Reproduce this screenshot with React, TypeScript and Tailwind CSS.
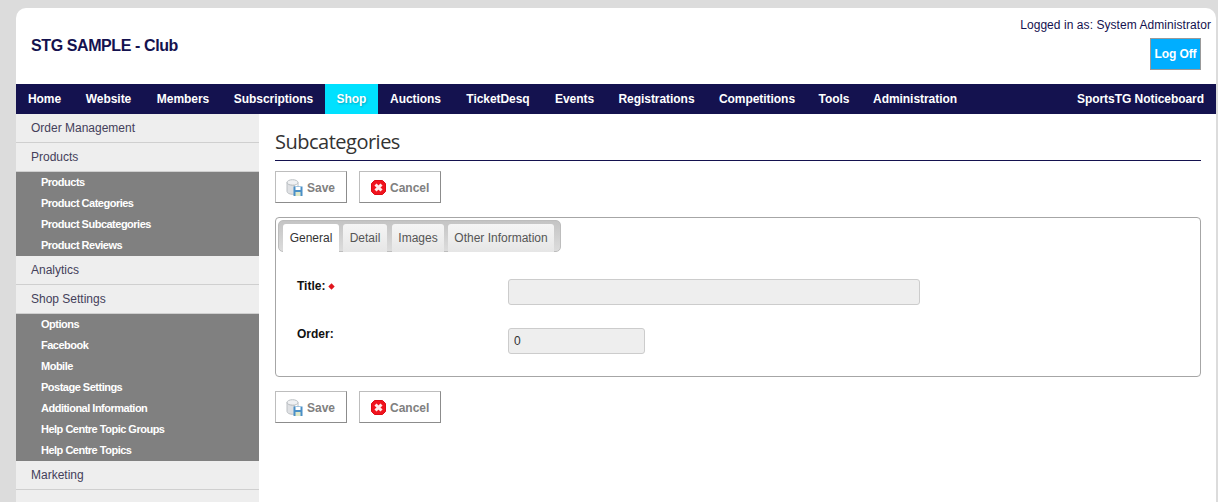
import { FC } from 'react';

// Fixed widths because the labels sit at set positions along the bar.
const NAV_ITEMS = [
  { label: 'Home', className: 'w-[57px]' },
  { label: 'Website', className: 'w-[71px]' },
  { label: 'Members', className: 'w-[78px]' },
  { label: 'Subscriptions', className: 'w-[103px]' },
  { label: 'Shop', className: 'w-[53px] bg-[#00e1ff] [text-shadow:1px_1px_2px_rgba(0,0,0,0.25)]' },
  { label: 'Auctions', className: 'w-[75px]' },
  { label: 'TicketDesq', className: 'w-[90px]' },
  { label: 'Events', className: 'w-[63px]' },
  { label: 'Registrations', className: 'w-[101px]' },
  { label: 'Competitions', className: 'w-[100px]' },
  { label: 'Tools', className: 'w-[54px]' },
  { label: 'Administration', className: 'w-[108px]' },
];

const SaveIcon: FC = () => (
  <svg width="17" height="17" viewBox="0 0 17 17" aria-hidden="true">
    <ellipse cx="6.5" cy="3.5" rx="5.5" ry="2.8" fill="#f0f1f3" stroke="#bcc0c4" />
    <path d="M1 3.5v9c0 1.500 2.500 2.800 5.500 2.800h2V6.300h-2C3.500 6.300 1 5 1 3.500z" fill="#dfe1e4" stroke="#bcc0c4" />
    <path d="M12 3.500v4" stroke="#bcc0c4" />
    <rect x="7.500" y="7.500" width="9" height="9.500" fill="#4a90c8" />
    <rect x="9.500" y="8" width="5" height="3" fill="#ffffff" />
    <rect x="9.500" y="13" width="5" height="4" fill="#dfe8c8" />
  </svg>
);

const CancelIcon: FC = () => (
  <svg width="15" height="15" viewBox="0 0 15 15" aria-hidden="true">
    <path d="M3.500 0.500h8l3 3v8l-3 3h-8l-3-3v-8z" fill="#f0141e" stroke="#dd0c16" />
    <path d="M4.500 4.500l6 6M10.500 4.500l-6 6" stroke="#ffecec" strokeWidth="3" />
  </svg>
);

const RequiredIcon: FC = () => (
  <svg width="7" height="7" viewBox="0 0 7 7" aria-hidden="true" className="ml-[3px] inline-block align-[0px]">
    <path d="M3.500 0.300L6.700 3.500 3.500 6.700 0.300 3.500z" fill="#e0151d" />
  </svg>
);

const ActionButtons: FC = () => (
  <div className="flex gap-[12px]">
    <button className="flex h-[32px] w-[72px] items-center border border-[#bdbdbd] border-r-[#8c8c8c] border-b-[#8c8c8c] bg-white pl-[10px] text-[12px] font-bold text-[#808080]">
      <SaveIcon />
      <span className="ml-[4px] pt-[1px]">Save</span>
    </button>
    <button className="flex h-[32px] w-[82px] items-center border border-[#bdbdbd] border-r-[#8c8c8c] border-b-[#8c8c8c] bg-white pl-[11px] text-[12px] font-bold text-[#808080]">
      <CancelIcon />
      <span className="ml-[4px] pt-[1px]">Cancel</span>
    </button>
  </div>
);

const SideLink: FC<{ label: string }> = ({ label }) => (
  <div className="flex h-[29px] items-center border-b border-[#cfcfcf] pl-[15px] text-[12px] text-[#44405a]">{label}</div>
);

const SubLinks: FC<{ items: string[] }> = ({ items }) => (
  <div className="bg-[#808080] pl-[25px]">
    {items.map((item) => (
      <div key={item} className="flex h-[21px] items-center text-[11px] font-bold tracking-[-0.5px] text-white">
        {item}
      </div>
    ))}
  </div>
);

export default function App() {
  return (
    <div className="h-[502px] overflow-hidden bg-[#dcdcdc] pl-[16px] pr-[2px] pt-[8px] font-['Liberation_Sans',Arial,sans-serif]">
      <div className="h-full overflow-hidden rounded-t-[10px] bg-white">
        <header className="flex h-[76px] justify-between">
          <h1 className="pl-[15px] pt-[28px] text-[16px] leading-[20px] font-bold tracking-[-0.4px] text-[#14124f]">STG SAMPLE - Club</h1>
          <div className="flex flex-col items-end pr-[5px] pt-[9px]">
            <p className="text-[12px] leading-[16px] tracking-[0.06px] text-[#14124f]">Logged in as: System Administrator</p>
            <button className="mr-[10px] mt-[5px] h-[32px] w-[51px] border border-[#999999] bg-[#00aeff] text-[12px] font-bold tracking-[-0.1px] text-white">
              Log Off
            </button>
          </div>
        </header>

        <nav className="flex h-[30px] items-stretch justify-between bg-[#14124f] text-[12px] font-bold tracking-[-0.05px] text-white">
          <div className="flex items-stretch">
            {NAV_ITEMS.map((item) => (
              <a key={item.label} className={`flex items-center justify-center ${item.className}`}>
                {item.label}
              </a>
            ))}
          </div>
          <a className="flex items-center pr-[12px]">SportsTG Noticeboard</a>
        </nav>

        <div className="flex h-[388px]">
          <aside className="w-[243px] shrink-0 bg-[#eeeeee]">
            <SideLink label="Order Management" />
            <SideLink label="Products" />
            <SubLinks items={['Products', 'Product Categories', 'Product Subcategories', 'Product Reviews']} />
            <SideLink label="Analytics" />
            <SideLink label="Shop Settings" />
            <SubLinks
              items={[
                'Options',
                'Facebook',
                'Mobile',
                'Postage Settings',
                'Additional Information',
                'Help Centre Topic Groups',
                'Help Centre Topics',
              ]}
            />
            <SideLink label="Marketing" />
          </aside>

          <main className="flex-1 pl-[16px] pr-[15px] pt-[14px]">
            <h2 className="h-[33px] border-b border-[#14124f] font-['Open_Sans',sans-serif] text-[20px] leading-[28px] tracking-[-0.5px] text-[#333333]">
              Subcategories
            </h2>
            <div className="mt-[10px]">
              <ActionButtons />
            </div>

            <section className="mt-[14px] h-[160px] rounded-[4px] border border-[#a6a6a6] p-[2px]">
              <div className="flex h-[32px] w-[283px] rounded-[5px] border border-[#bdbdbd] bg-gradient-to-b from-[#c4c4c4] to-[#dcdcdc] pl-[4px] pt-[3px] text-[12px] text-[#555555]">
                <span className="flex h-[28px] w-[56px] items-center justify-center rounded-t-[3px] bg-white text-[#333333]">General</span>
                <span className="ml-[4px] flex h-[28px] w-[44px] items-center justify-center rounded-t-[3px] bg-gradient-to-b from-[#f5f5f5] to-[#e6e6e6]">Detail</span>
                <span className="ml-[5px] flex h-[28px] w-[52px] items-center justify-center rounded-t-[3px] bg-gradient-to-b from-[#f5f5f5] to-[#e6e6e6]">Images</span>
                <span className="ml-[4px] flex h-[28px] w-[106px] items-center justify-center rounded-t-[3px] bg-gradient-to-b from-[#f5f5f5] to-[#e6e6e6]">Other Information</span>
              </div>

              <div className="mt-[27px] flex h-[26px] pl-[19px]">
                <label className="w-[211px] pt-[1px] text-[12px] font-bold leading-[12px] text-[#111111]">
                  Title:<RequiredIcon />
                </label>
                <input className="h-[26px] w-[412px] rounded-[3px] border border-[#cccccc] bg-[#eeeeee]" />
              </div>
              <div className="mt-[23px] flex h-[26px] pl-[19px]">
                <label className="w-[211px] text-[12px] font-bold leading-[12px] text-[#111111]">Order:</label>
                <input
                  defaultValue="0"
                  className="h-[26px] w-[137px] rounded-[3px] border border-[#cccccc] bg-[#eeeeee] pl-[5px] text-[12px] text-[#333333]"
                />
              </div>
            </section>

            <div className="mt-[14px]">
              <ActionButtons />
            </div>
          </main>
        </div>
      </div>
    </div>
  );
}
